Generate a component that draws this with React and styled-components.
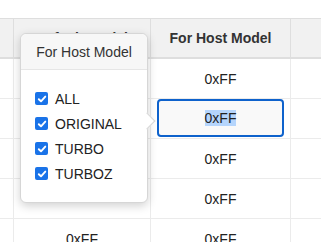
import React from "react";
import styled, { createGlobalStyle } from "styled-components";

const Global = createGlobalStyle`
  html, body { margin: 0; padding: 0; background: #fff; }
  body { font-family: "Liberation Sans", Arial, sans-serif; overflow: hidden; }
`;

const Page = styled.div`
  position: relative;
  width: 321px;
  height: 242px;
  padding-top: 18px;
  box-sizing: border-box;
  overflow: hidden;
`;

const Grid = styled.div`
  display: grid;
  grid-template-columns: 14px 137px 140px 1fr;
  width: 400px;
`;

const HeadCell = styled.div`
  height: 38px;
  background: #f1f1f1;
  border-top: 1px solid #dedede;
  border-bottom: 2px solid #dedede;
  border-right: ${(p) => (p.$last ? "none" : "1px solid #dedede")};
  display: flex;
  align-items: center;
  justify-content: center;
  font-size: 14px;
  font-weight: bold;
  color: #333;
  white-space: nowrap;
`;

const Cell = styled.div`
  height: 39px;
  border-bottom: 1px solid #ebebeb;
  border-right: ${(p) => (p.$last ? "none" : "1px solid #ebebeb")};
  display: flex;
  align-items: center;
  justify-content: center;
  font-size: 14px;
  color: #222;
  padding: ${(p) => (p.$editing ? "0 6px 0 6px" : "0")};
  box-sizing: content-box;
`;

const EditBox = styled.div`
  flex: 1;
  height: 38px;
  box-sizing: border-box;
  align-self: flex-start;
  border: 2px solid #0e62cc;
  border-radius: 4px;
  background: #f9f9f9;
  display: flex;
  align-items: center;
  justify-content: center;
  font-size: 14px;
  color: #222;
`;

const Selected = styled.span`
  background: #b5d5fc;
`;

const Popover = styled.div`
  position: absolute;
  left: 20px;
  top: 33px;
  width: 128px;
  height: 170px;
  box-sizing: border-box;
  background: #fff;
  border: 1px solid #d6d6d6;
  border-radius: 6px;
  box-shadow: 0 3px 10px rgba(0, 0, 0, 0.18);
  display: flex;
  flex-direction: column;
`;

const Arrow = styled.div`
  position: absolute;
  right: -6px;
  top: 81px;
  width: 11px;
  height: 11px;
  background: #fff;
  border-top: 1px solid #d6d6d6;
  border-right: 1px solid #d6d6d6;
  transform: rotate(45deg);
`;

const PopTitle = styled.div`
  height: 35px;
  border-bottom: 1px solid #e6e6e6;
  background: #f7f7f7;
  border-radius: 6px 6px 0 0;
  display: flex;
  align-items: center;
  justify-content: center;
  font-size: 14px;
  color: #333;
`;

const List = styled.div`
  display: flex;
  flex-direction: column;
  padding: 16px 0 0 14px;
`;

const Item = styled.label`
  height: 25px;
  display: flex;
  align-items: center;
  gap: 7px;
  font-size: 14px;
  color: #222;
`;

const Box = styled.span`
  width: 13px;
  height: 13px;
  border-radius: 2px;
  background: #1a73e8;
  display: flex;
  align-items: center;
  justify-content: center;
`;

const Check = () => (
  <Box>
    <svg width="10" height="10" viewBox="0 0 10 10">
      <path d="M1.8 5.2 L4 7.3 L8.3 2.6" fill="none" stroke="#fff" strokeWidth="1.9" strokeLinecap="round" strokeLinejoin="round" />
    </svg>
  </Box>
);

const rows = [0, 1, 2, 3, 4];
const options = ["ALL", "ORIGINAL", "TURBO", "TURBOZ"];

export default function App() {
  return (
    <>
      <Global />
      <Page>
        <Grid>
          <HeadCell />
          <HeadCell>Default Model</HeadCell>
          <HeadCell>For Host Model</HeadCell>
          <HeadCell $last />
          {rows.map((r) => (
            <React.Fragment key={r}>
              <Cell />
              <Cell>{r === 4 ? "0xFF" : ""}</Cell>
              {r === 1 ? (
                <Cell $editing>
                  <EditBox>
                    <Selected>0xFF</Selected>
                  </EditBox>
                </Cell>
              ) : (
                <Cell>0xFF</Cell>
              )}
              <Cell $last />
            </React.Fragment>
          ))}
        </Grid>
        <Popover>
          <Arrow />
          <PopTitle>For Host Model</PopTitle>
          <List>
            {options.map((o) => (
              <Item key={o}>
                <Check />
                {o}
              </Item>
            ))}
          </List>
        </Popover>
      </Page>
    </>
  );
}
